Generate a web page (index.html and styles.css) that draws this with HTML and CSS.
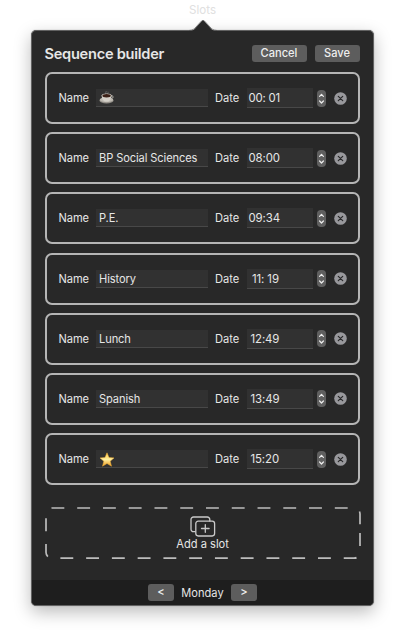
FILE: index.html
```html
<!DOCTYPE html>
<html lang="en">
<head>
<meta charset="utf-8">
<title>Sequence builder</title>
<link rel="stylesheet" href="styles.css">
</head>
<body>
<svg class="defs" width="0" height="0" aria-hidden="true">
  <symbol id="stepper" viewBox="0 0 9 17"><rect width="9" height="17" rx="4" fill="#606060"/><path d="M2.6 6.3 4.5 4.3l1.9 2M2.6 11l1.9 2 1.9-2" fill="none" stroke="#eee" stroke-width="1.2" stroke-linecap="round" stroke-linejoin="round"/></symbol>
  <symbol id="remove" viewBox="0 0 13 13"><circle cx="6.5" cy="6.5" r="6.3" fill="#98989c"/><path d="m4.3 4.3 4.4 4.4m0-4.4-4.4 4.4" stroke="#29292a" stroke-width="1.2" stroke-linecap="round"/></symbol>
</svg>
<div class="menu-title">Slots</div>
<main class="popover">
  <svg class="arrow" viewBox="0 0 28 13"><path d="M0 12.2C4 12 5.3 10.3 7 8.4L12.4 2.4Q14 .7 15.6 2.4L21 8.4C22.7 10.3 24 12 28 12.2V13H0Z" fill="#282828"/><path d="M0 11.5C4 11.3 5.3 9.8 7 8L12.4 2.1Q14 .5 15.6 2.1L21 8C22.7 9.8 24 11.3 28 11.5" fill="none" stroke="#555" stroke-width=".7"/></svg>
  <header class="header">
    <h1>Sequence builder</h1>
    <button class="btn cancel">Cancel</button>
    <button class="btn save">Save</button>
  </header>
  <section class="slots">
    <div class="slot"><span class="label">Name</span><div class="field"><svg class="cup" viewBox="0 0 16 14"><path d="M7 3C5.5 1.8 8 1.4 7 0M9 3C8 2 9.8 1.5 9 .7" fill="none" stroke="#777" stroke-width=".7"/><ellipse cx="7.5" cy="9.4" rx="7" ry="3" fill="#8f8b84"/><ellipse cx="7.5" cy="8.8" rx="6.6" ry="2.4" fill="#bdb9b1"/><path d="M2.7 4.3h9.8c0 4-1.5 6.3-4.9 6.3S2.7 8.3 2.7 4.3Z" fill="#d5d1c9"/><path d="M12 5c3-.8 3 2.5-.8 2.8" fill="none" stroke="#bcb8b0"/><ellipse cx="7.6" cy="4.5" rx="4.9" ry="2.1" fill="#d0ccc4"/><ellipse cx="7.6" cy="4.7" rx="4.2" ry="1.7" fill="#3c2118"/></svg></div><span class="label date">Date</span><div class="time first">00: 01</div><svg class="stepper"><use href="#stepper"/></svg><svg class="remove"><use href="#remove"/></svg></div>
    <div class="slot"><span class="label">Name</span><div class="field">BP Social Sciences</div><span class="label date">Date</span><div class="time">08:00</div><svg class="stepper"><use href="#stepper"/></svg><svg class="remove"><use href="#remove"/></svg></div>
    <div class="slot"><span class="label">Name</span><div class="field">P.E.</div><span class="label date">Date</span><div class="time">09:34</div><svg class="stepper"><use href="#stepper"/></svg><svg class="remove"><use href="#remove"/></svg></div>
    <div class="slot"><span class="label">Name</span><div class="field">History</div><span class="label date">Date</span><div class="time elevens">11: 19</div><svg class="stepper"><use href="#stepper"/></svg><svg class="remove"><use href="#remove"/></svg></div>
    <div class="slot"><span class="label">Name</span><div class="field">Lunch</div><span class="label date">Date</span><div class="time teens">12:49</div><svg class="stepper"><use href="#stepper"/></svg><svg class="remove"><use href="#remove"/></svg></div>
    <div class="slot"><span class="label">Name</span><div class="field">Spanish</div><span class="label date">Date</span><div class="time teens">13:49</div><svg class="stepper"><use href="#stepper"/></svg><svg class="remove"><use href="#remove"/></svg></div>
    <div class="slot"><span class="label">Name</span><div class="field"><svg class="star" viewBox="0 0 16 15"><defs><linearGradient id="gold" x2="0" y2="1"><stop stop-color="#ffc843"/><stop offset=".5" stop-color="#fff0a0"/><stop offset="1" stop-color="#ed9b20"/></linearGradient></defs><path d="m8 .8 2 4.7 5 .4-3.8 3.3 1.3 5L8 11.5l-4.5 2.7 1.3-5L1 5.9l5-.4Z" fill="url(#gold)" stroke="#efaf36" stroke-width=".5" stroke-linejoin="round"/></svg></div><span class="label date">Date</span><div class="time teens">15:20</div><svg class="stepper"><use href="#stepper"/></svg><svg class="remove"><use href="#remove"/></svg></div>
  </section>
  <div class="add">
    <svg class="dashes" viewBox="0 0 316 52"><path d="M315 26V45.2a6 6 0 0 1-6 6H7a6 6 0 0 1-6-6V7a6 6 0 0 1 6-6H309a6 6 0 0 1 6 6V26" fill="none" stroke="#bcbcbc" stroke-width="1.7" stroke-dasharray="12.88 12.88"/></svg>
    <svg class="plus" viewBox="0 0 26 22"><path d="M5.2 15.7H3.5a2.5 2.5 0 0 1-2.5-2.5V3.5A2.5 2.5 0 0 1 3.5 1h13.8a2.5 2.5 0 0 1 2.5 2.5v1.6M15.3 8.7v7.6m-3.8-3.8h7.6" fill="none" stroke="#c9c9c9" stroke-width="1.3" stroke-linecap="round"/><rect x="5.8" y="5.2" width="18.8" height="14.8" rx="2.4" fill="none" stroke="#c9c9c9" stroke-width="1.3"/></svg>
    <span>Add a slot</span>
  </div>
  <footer class="footer"><button class="btn nav">&lt;</button><span class="day">Monday</span><button class="btn nav">&gt;</button></footer>
</main>
</body>
</html>
```
FILE: styles.css
```css
* { box-sizing: border-box; }
body {
  margin: 0;
  height: 640px;
  overflow: hidden;
  background: #fff;
  color: #e6e6e6;
  font: 11.1px/14px Inter, "Liberation Sans", sans-serif;
}
svg { display: block; }
.defs { position: absolute; }
.menu-title {
  height: 30px;
  padding-top: 3px;
  text-align: center;
  color: #e0e0e0;
  font-size: 11.6px;
}
.popover {
  position: relative;
  display: flex;
  flex-direction: column;
  width: 343px;
  height: 576px;
  margin-left: 31px;
  border: 1px solid #626262;
  border-radius: 5px;
  background: #282828;
  box-shadow: 0 0 1px #777, 0 6px 17px rgba(0, 0, 0, .27);
}
.arrow {
  position: absolute;
  top: -12px;
  left: 156.5px;
  width: 28px;
  height: 13px;
}
.header {
  display: flex;
  align-items: center;
  height: 17px;
  margin: 14px 13.5px 0 12.5px;
}
h1 {
  flex: 1;
  margin: 0;
  font-size: 14.6px;
  font-weight: 600;
  letter-spacing: -.26px;
  line-height: 16px;
  white-space: nowrap;
}
.btn {
  height: 17px;
  padding: 0;
  border: 0;
  border-radius: 3px;
  background: #5d5d5d;
  color: #eee;
  font: inherit;
  font-weight: 500;
  line-height: 17px;
}
.cancel { width: 55px; margin-right: 8px; }
.save { width: 45px; }
.slots {
  display: flex;
  flex-direction: column;
  gap: 8.2px;
  margin: 10px 13px 0 12.5px;
}
.slot {
  display: flex;
  align-items: center;
  height: 52px;
  padding-left: 12px;
  border: 2px solid #b5b5b5;
  border-radius: 7px;
}
.label { width: 37.5px; flex: none; letter-spacing: -.1px; }
.label.date { width: 31.5px; margin-left: 7px; letter-spacing: 0; }
.field, .time {
  flex: none;
  border-bottom: 1px solid #484848;
  background: #313131;
  white-space: nowrap;
}
.field {
  display: flex;
  align-items: center;
  width: 112px;
  height: 18px;
  padding: 1px 0 0 3px;
  letter-spacing: -.1px;
}
.time {
  width: 66.5px;
  height: 20px;
  padding-left: 2px;
  font-size: 11.4px;
  line-height: 21px;
  letter-spacing: -.1px;
}
.first { letter-spacing: -.2px; }
.teens { padding-left: 4px; }
.elevens { padding-left: 5.5px; }
.cup { width: 16px; height: 14px; }
.star { width: 16px; height: 15px; }
.stepper { width: 9px; height: 17px; margin-left: 3.7px; }
.remove { width: 13px; height: 13px; margin-left: 8.4px; }
.add {
  position: relative;
  display: flex;
  flex-direction: column;
  align-items: center;
  width: 316px;
  height: 52px;
  margin: 22px 0 0 12.6px;
  padding-top: 8.5px;
}
.dashes { position: absolute; inset: 0; width: 316px; height: 52px; }
.plus { width: 26px; height: 22px; margin-bottom: -1px; }
.footer {
  display: flex;
  align-items: center;
  justify-content: center;
  height: 25px;
  margin-top: auto;
  border-radius: 0 0 4px 4px;
  background: #1e1e1e;
}
.nav { width: 26px; }
.day { width: 57px; padding-top: 1px; text-align: center; }
```
